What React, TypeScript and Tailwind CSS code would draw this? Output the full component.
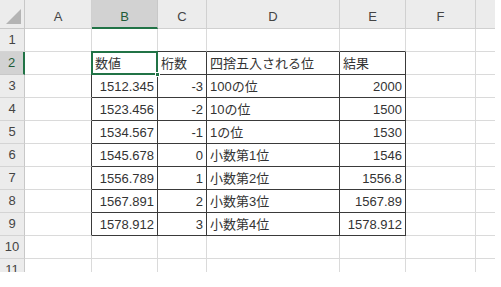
import React from "react";

const cols = ["A", "B", "C", "D", "E", "F", ""];

type Cell = { text?: string; right?: boolean };

// rows 1..11, columns A..F + overflow column
const data: Record<number, Cell[]> = {
  2: [{}, { text: "数値" }, { text: "桁数" }, { text: "四捨五入される位" }, { text: "結果" }],
  3: [{}, { text: "1512.345", right: true }, { text: "-3", right: true }, { text: "100の位" }, { text: "2000", right: true }],
  4: [{}, { text: "1523.456", right: true }, { text: "-2", right: true }, { text: "10の位" }, { text: "1500", right: true }],
  5: [{}, { text: "1534.567", right: true }, { text: "-1", right: true }, { text: "1の位" }, { text: "1530", right: true }],
  6: [{}, { text: "1545.678", right: true }, { text: "0", right: true }, { text: "小数第1位" }, { text: "1546", right: true }],
  7: [{}, { text: "1556.789", right: true }, { text: "1", right: true }, { text: "小数第2位" }, { text: "1556.8", right: true }],
  8: [{}, { text: "1567.891", right: true }, { text: "2", right: true }, { text: "小数第3位" }, { text: "1567.89", right: true }],
  9: [{}, { text: "1578.912", right: true }, { text: "3", right: true }, { text: "小数第4位" }, { text: "1578.912", right: true }],
};

const rows = [1, 2, 3, 4, 5, 6, 7, 8, 9, 10, 11];

function inTable(r: number, c: number) {
  return r >= 2 && r <= 9 && c >= 1 && c <= 4;
}

function GridCell({ r, c }: { r: number; c: number }) {
  const cell = data[r]?.[c] ?? {};
  const darkRight = inTable(r, c) || (r >= 2 && r <= 9 && c === 0);
  const darkBottom = inTable(r, c) || (r === 1 && c >= 1 && c <= 4);
  const selected = r === 2 && c === 1;
  return (
    <div
      className={`relative flex h-[23px] items-center overflow-visible whitespace-nowrap px-[3px] text-[13px] text-[#333] ${
        cell.right ? "justify-end" : "justify-start"
      } ${c === 6 ? "" : "border-r"} border-b ${
        darkRight ? "border-r-[#3a3a3a]" : "border-r-[#dadada]"
      } ${darkBottom ? "border-b-[#3a3a3a]" : "border-b-[#dadada]"}`}
    >
      {cell.text && <span className="pt-[1px]">{cell.text}</span>}
      {selected && (
        <>
          <div className="pointer-events-none absolute -left-[1px] -top-[1px] bottom-[-1px] right-[-1px] border-2 border-[#217346]" />
          <div className="absolute -bottom-[3px] -right-[3px] z-10 size-[5px] border border-white bg-[#217346]" />
        </>
      )}
    </div>
  );
}

export default function App() {
  return (
    <div
      className="h-[287px] w-[501px] overflow-hidden bg-white"
      style={{ fontFamily: '"Liberation Sans", "Noto Sans CJK JP", sans-serif' }}
    >
      <div className="h-[272px] w-[495px] overflow-hidden">
        <div className="grid grid-cols-[25px_67px_66px_49px_133px_66px_70px_19px]">
          {/* column headers */}
          <div className="flex h-[29px] items-end justify-end border-b border-r border-[#c8c8c8] bg-[#ececec] pb-[4px] pr-[3px]">
            <svg width="15" height="15" viewBox="0 0 15 15">
              <polygon points="15,0 15,15 0,15" fill="#b4b4b4" />
            </svg>
          </div>
          {cols.map((c, i) => (
            <div
              key={i}
              className={`flex h-[29px] items-center justify-center pt-[6px] text-[13px] ${
                i === 1
                  ? "border-b-2 border-r border-b-[#217346] border-r-[#c8c8c8] bg-[#d2d2d2] text-[#1e5c38]"
                  : "border-b border-r border-[#d0d0d0] bg-[#ececec] text-[#444]"
              } ${i === 6 ? "border-r-0" : ""}`}
            >
              {c}
            </div>
          ))}

          {rows.map((r) => (
            <React.Fragment key={r}>
              <div
                className={`flex h-[23px] items-center justify-center text-[13px] ${
                  r === 2
                    ? "border-b border-r-2 border-b-[#c8c8c8] border-r-[#217346] bg-[#d2d2d2] text-[#1e5c38]"
                    : "border-b border-r border-b-[#d4d4d4] border-r-[#c8c8c8] bg-[#ececec] text-[#444]"
                }`}
              >
                {r}
              </div>
              {[0, 1, 2, 3, 4, 5, 6].map((c) => (
                <GridCell key={c} r={r} c={c} />
              ))}
            </React.Fragment>
          ))}
        </div>
      </div>
    </div>
  );
}
